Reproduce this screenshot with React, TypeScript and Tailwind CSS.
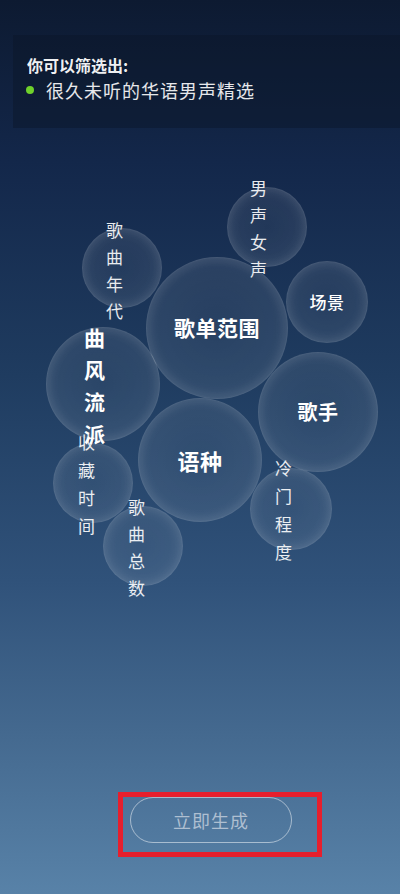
const font = { fontFamily: '"Noto Sans CJK SC", "Noto Sans", sans-serif' };

type Bubble = { pos: string; label?: string; text?: string };

const bubbles: Bubble[] = [
  { pos: "left-[82px] top-[100px] w-[80px] h-[80px]" },
  { pos: "left-[227px] top-[59px] w-[80px] h-[80px]" },
  { pos: "left-[146px] top-[129px] w-[142px] h-[142px]", label: "歌单范围", text: "text-[21px] font-bold" },
  { pos: "left-[286px] top-[133px] w-[82px] h-[82px]", label: "场景", text: "text-[17px] font-medium" },
  { pos: "left-[46px] top-[199px] w-[114px] h-[114px]" },
  { pos: "left-[258px] top-[224px] w-[120px] h-[120px]", label: "歌手", text: "text-[20px] font-bold" },
  { pos: "left-[138px] top-[270px] w-[124px] h-[124px]", label: "语种", text: "text-[22px] font-bold" },
  { pos: "left-[53px] top-[315px] w-[80px] h-[80px]" },
  { pos: "left-[250px] top-[340px] w-[82px] h-[82px]" },
  { pos: "left-[103px] top-[378px] w-[80px] h-[80px]" },
];

const verticalLabels = [
  { text: "歌曲年代", cls: "left-[106px] top-[88px] w-[17px] text-[17px] leading-[27px] text-white/90" },
  { text: "男声女声", cls: "left-[250px] top-[46px] w-[17px] text-[17px] leading-[27px] text-white/90" },
  { text: "曲风流派", cls: "left-[84px] top-[193px] w-[21px] text-[21px] leading-[32px] font-bold text-white" },
  { text: "收藏时间", cls: "left-[78px] top-[300px] w-[17px] text-[17px] leading-[28px] text-white/90" },
  { text: "冷门程度", cls: "left-[275px] top-[326px] w-[17px] text-[17px] leading-[28px] text-white/90" },
  { text: "歌曲总数", cls: "left-[128px] top-[365px] w-[17px] text-[17px] leading-[27px] text-white/90" },
];

export default function App() {
  return (
    <div
      className="w-[400px] h-[894px] overflow-hidden flex flex-col bg-[linear-gradient(180deg,#0d1a31_0%,#13274a_18%,#1f3c60_42%,#30527a_65%,#44698f_82%,#5882a8_100%)]"
      style={font}
    >
      {/* filter summary */}
      <div className="pt-[35px]">
        <div className="ml-[13px] h-[93px] bg-[#0a1629]/45 pl-[14px] pt-[18px]">
          <div className="text-[16px] font-bold text-white/95 leading-[24px]">你可以筛选出:</div>
          <div className="mt-[1px] flex items-center gap-[12px]">
            <span className="w-[8px] h-[8px] rounded-full bg-[#6fd12b] ml-[-1px]" />
            <span className="text-[18px] text-white/90 leading-[24px] tracking-[1px]">很久未听的华语男声精选</span>
          </div>
        </div>
      </div>

      {/* bubble canvas */}
      <div className="relative h-[664px]">
        {bubbles.map((b, i) => (
          <div
            key={i}
            className={`absolute ${b.pos} rounded-full border border-white/10 bg-[radial-gradient(circle,rgba(255,255,255,0.05)_0%,rgba(255,255,255,0.08)_62%,rgba(255,255,255,0.17)_100%)] shadow-[inset_0_0_14px_rgba(255,255,255,0.12)] flex items-center justify-center`}
          >
            {b.label && <span className={`${b.text} text-white tracking-[0.5px]`}>{b.label}</span>}
          </div>
        ))}
        {verticalLabels.map((l) => (
          <div key={l.text} className={`absolute ${l.cls} flex flex-col items-center`}>
            {l.text.split("").map((c, i) => (
              <span key={i}>{c}</span>
            ))}
          </div>
        ))}
      </div>

      {/* action */}
      <div className="pl-[118px]">
        <div className="w-[204px] h-[65px] border-[5px] border-[#e61f2d] pl-[7px]">
          <button className="w-[162px] h-[46px] rounded-full border border-white/50 text-[18px] text-[#aebfd1] tracking-[1px]">
            立即生成
          </button>
        </div>
      </div>
    </div>
  );
}
